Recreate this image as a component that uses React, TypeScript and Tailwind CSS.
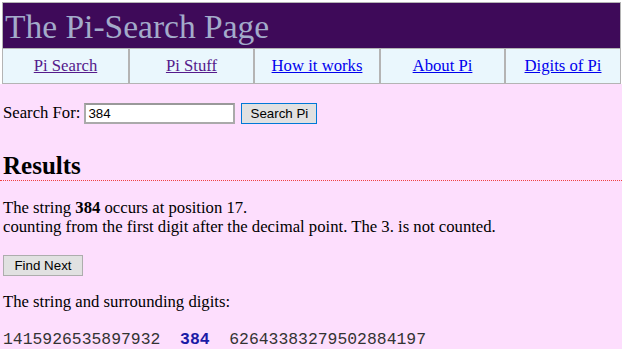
const navLinks = [
  { label: 'Pi Search', visited: true },
  { label: 'Pi Stuff', visited: true },
  { label: 'How it works', visited: false },
  { label: 'About Pi', visited: false },
  { label: 'Digits of Pi', visited: false },
];

export default function App() {
  return (
    <div className="min-h-screen w-full bg-[#fddefd] font-['Liberation_Serif',serif] text-[16.7px] text-black">
      {/* Header table */}
      <div className="bg-white pl-[2px] pt-[2px] pr-[1px]">
        <div className="border border-[#b4b4b4]">
          <div className="bg-[#3e0a59] h-[45px] px-[2px] flex items-center">
            <h1 className="text-[33.5px] leading-none text-[#a3abca] pt-[2px]">The Pi-Search Page</h1>
          </div>
          <div className="grid grid-cols-[125px_125px_126px_125px_1fr] bg-[#eaf7fd] h-[35px] border-t border-[#b4b4b4]">
            {navLinks.map((l, i) => (
              <div
                key={l.label}
                className={
                  'flex items-center justify-center ' +
                  (i > 0 ? 'border-l-2 border-[#b4b4b4]' : '')
                }
              >
                <a
                  href="#"
                  className={
                    'underline ' + (l.visited ? 'text-[#551a8b]' : 'text-[#0000ee]')
                  }
                >
                  {l.label}
                </a>
              </div>
            ))}
          </div>
        </div>
      </div>

      <div className="px-[3px]">
        {/* Search form */}
        <div className="flex items-center mt-[18px] h-[22px]">
          <span>Search For:</span>
          <input
            defaultValue="384"
            className="ml-[4px] w-[151px] h-[21px] bg-white border-2 border-[#aaaaaa] border-t-[#999] px-[2px] font-['Liberation_Sans',sans-serif] text-[13.33px] outline-none"
          />
          <button className="ml-[6px] w-[76px] h-[21px] bg-[#e1e1e1] border border-[#0078d7] font-['Liberation_Sans',sans-serif] text-[13.33px] text-black">
            Search Pi
          </button>
        </div>

        {/* Results */}
        <h2 className="mt-[28px] text-[25px] font-bold leading-[28px]">Results</h2>
        <div className="-mx-[3px] border-b border-dotted border-[#f04040]" />

        <p className="mt-[17px] leading-[19px]">
          The string <b>384</b> occurs at position 17.
          <br />
          counting from the first digit after the decimal point. The 3. is not counted.
        </p>

        <button className="mt-[19px] w-[80px] h-[21px] bg-[#e1e1e1] border border-[#adadad] font-['Liberation_Sans',sans-serif] text-[13.33px] text-black">
          Find Next
        </button>

        <p className="mt-[15px] leading-[19px]">The string and surrounding digits:</p>

        <p className="mt-[19px] font-['Liberation_Mono',monospace] text-[16.4px] leading-[19px] whitespace-pre text-[#333]">
          1415926535897932  <b className="text-[#1a1aa6]">384</b>  62643383279502884197
        </p>
      </div>
    </div>
  );
}
